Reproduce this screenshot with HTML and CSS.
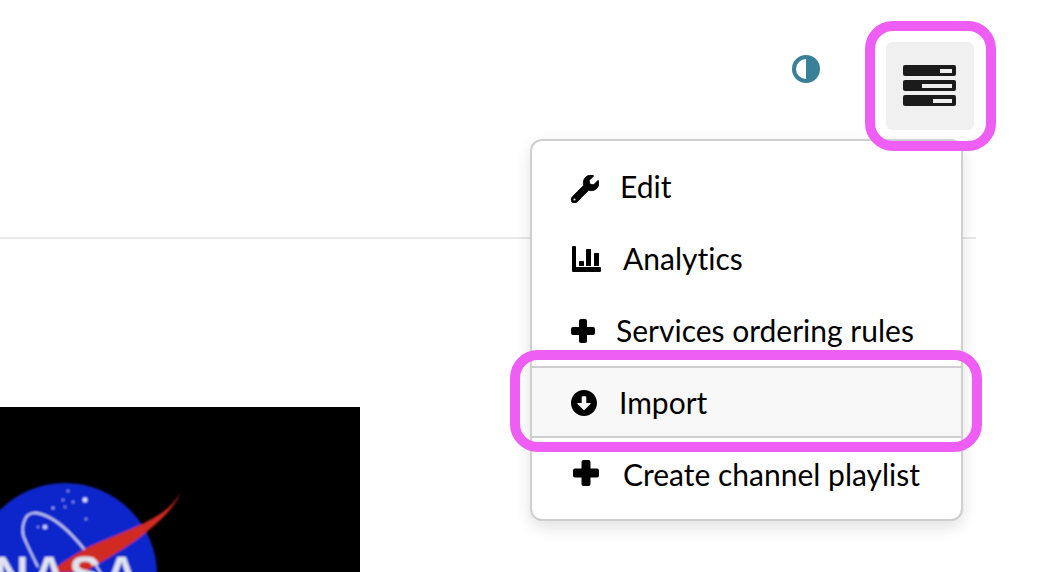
FILE: index.html
```html
<!DOCTYPE html>
<html lang="en">
<head>
    <meta charset="UTF-8">
    <meta name="viewport" content="width=device-width, initial-scale=1.0">
    <title>Channel</title>
    <link rel="stylesheet" href="styles.css">
</head>
<body>
    <header class="top-bar">
        <svg class="contrast-icon" viewBox="0 0 28 28">
            <circle cx="14" cy="14" r="12" fill="none" stroke="#3a8197" stroke-width="4"/>
            <path d="M14 2a12 12 0 0 1 0 24z" fill="#3a8197"/>
        </svg>
        <button class="menu-btn" type="button">
            <svg class="server-icon" viewBox="0 0 53 41">
                <rect x="0" y="0" width="53" height="11" rx="2" fill="#1b1b1b"/>
                <rect x="0" y="15" width="53" height="11" rx="2" fill="#1b1b1b"/>
                <rect x="0" y="30" width="53" height="11" rx="2" fill="#1b1b1b"/>
                <rect x="37" y="4" width="12" height="4" fill="#eee"/>
                <rect x="19" y="19" width="30" height="4" fill="#eee"/>
                <rect x="30" y="34" width="19" height="4" fill="#eee"/>
            </svg>
        </button>
    </header>

    <main class="content">
        <!-- channel thumbnail -->
        <svg class="thumb" viewBox="0 0 360 165">
            <defs>
                <filter id="soft"><feGaussianBlur stdDeviation="0.8"/></filter>
            </defs>
            <rect width="360" height="165" fill="#000"/>
            <g filter="url(#soft)">
                <circle cx="65" cy="168" r="92" fill="#0a28cc"/>
                <circle cx="85" cy="93" r="2.4" fill="#dfe4ff"/>
                <circle cx="45" cy="120" r="2.2" fill="#cfd6ff"/>
                <circle cx="63" cy="93" r="1" fill="#b9c3ff"/>
                <circle cx="73" cy="95" r="1" fill="#b9c3ff"/>
                <circle cx="68" cy="84" r="1" fill="#b9c3ff"/>
                <circle cx="53" cy="101" r="1.2" fill="#b9c3ff"/>
                <circle cx="65" cy="100" r="0.9" fill="#b9c3ff"/>
                <circle cx="86" cy="112" r="1" fill="#b9c3ff"/>
                <circle cx="38" cy="120" r="0.9" fill="#b9c3ff"/>
                <path d="M102 168C85 140 60 110 37 106C22 104 20 125 26 135C29 142 33 150 38 160" fill="none" stroke="#d8dcf5" stroke-width="1.8"/>
                <path d="M181 85C170 105 150 115 100 135C85 141 70 150 50 165L85 165C100 155 120 145 140 130C160 115 175 100 181 85z" fill="#d12c22"/>
                <text class="thumb-text" x="-6" y="183">NASA</text>
            </g>
        </svg>
    </main>

    <!-- dropdown, opened from the menu button -->
    <nav class="dropdown">
        <a class="dropdown-item">
            <svg class="icon icon-wrench" viewBox="0 0 512 512"><path d="M507.73 109.1c-2.24-9.03-13.54-12.09-20.12-5.51l-74.36 74.36-67.88-11.31-11.31-67.88 74.36-74.36c6.62-6.62 3.43-17.9-5.66-20.16-47.38-11.74-99.55.91-136.58 37.93-39.64 39.64-50.55 97.1-34.05 147.2L18.74 402.76c-24.99 24.99-24.99 65.51 0 90.5 24.99 24.99 65.51 24.99 90.5 0l213.21-213.21c50.12 16.71 107.47 5.68 147.37-34.22 37.07-37.07 49.7-89.32 37.91-136.73zM64 472c-13.25 0-24-10.75-24-24 0-13.26 10.75-24 24-24s24 10.74 24 24c0 13.25-10.75 24-24 24z"/></svg>
            Edit
        </a>
        <a class="dropdown-item">
            <svg class="icon icon-chart" viewBox="0 0 29 26"><path d="M0 1a1 1 0 0 1 1-1h2a1 1 0 0 1 1 1v20h24a1 1 0 0 1 1 1v3a1 1 0 0 1-1 1H1a1 1 0 0 1-1-1z"/><rect x="7" y="15" width="5" height="5" rx=".6"/><rect x="14" y="3" width="5" height="17" rx=".6"/><rect x="22" y="7" width="5" height="13" rx=".6"/></svg>
            Analytics
        </a>
        <a class="dropdown-item">
            <svg class="icon icon-plus" viewBox="0 0 24 24"><rect x="8" y="0" width="8" height="24" rx="2"/><rect x="0" y="8" width="24" height="8" rx="2"/></svg>
            Services ordering rules
        </a>
        <a class="dropdown-item active">
            <svg class="icon icon-import" viewBox="8 8 496 496"><path d="M504 256c0 137-111 248-248 248S8 393 8 256 119 8 256 8s248 111 248 248zM212 140v116h-70.900c-10.700 0-16.100 13-8.500 20.500l114.900 114.300c4.700 4.700 12.200 4.700 16.900 0l114.900-114.300c7.600-7.600 2.200-20.500-8.500-20.500H300V140c0-6.600-5.400-12-12-12h-64c-6.600 0-12 5.400-12 12z"/></svg>
            Import
        </a>
        <a class="dropdown-item">
            <svg class="icon icon-plus-lg" viewBox="0 0 26 26"><rect x="8.500" y="0" width="9" height="26" rx="2"/><rect x="0" y="8.500" width="26" height="9" rx="2"/></svg>
            Create channel playlist
        </a>
    </nav>

    <!-- annotation outlines from the docs screenshot -->
    <div class="callout callout-btn"></div>
    <div class="callout callout-item"></div>
</body>
</html>
```

FILE: styles.css
```css
* {
    box-sizing: border-box;
}

html, body {
    height: 100%;
}

body {
    margin: 0;
    position: relative;
    overflow: hidden;
    background: #fff;
    color: #000;
    font-family: Lato, 'Noto Sans', sans-serif;
}

.top-bar {
    width: 976px;
    height: 239px;
    padding: 42px 2px 0 0;
    display: flex;
    justify-content: flex-end;
    align-items: flex-start;
    border-bottom: 2px solid #e8e8e8;
}

.contrast-icon {
    width: 28px;
    height: 28px;
    margin: 13px 66px 0 0;
}

.menu-btn {
    width: 88px;
    height: 88px;
    padding: 0 1px 1px 0;
    border: none;
    border-radius: 6px;
    background: #f0f0f0;
    display: flex;
    align-items: center;
    justify-content: center;
}

.server-icon {
    width: 53px;
    height: 41px;
}

.content {
    padding-top: 168px;
}

.thumb {
    display: block;
    width: 360px;
    height: 165px;
}

.thumb-text {
    font-family: 'Liberation Sans', sans-serif;
    font-weight: 700;
    font-size: 48px;
    letter-spacing: 3px;
    fill: #dfe3ee;
}

.dropdown {
    position: absolute;
    left: 530px;
    top: 139px;
    width: 433px;
    height: 382px;
    padding-top: 9px;
    background: #fff;
    border: 2px solid #cfcfcf;
    border-radius: 12px;
    box-shadow: 0 6px 16px rgba(0, 0, 0, 0.12);
}

.dropdown-item {
    height: 72px;
    padding-left: 39px;
    display: flex;
    align-items: center;
    font-size: 30px;
    font-variant-ligatures: none;
    white-space: nowrap;
}

.dropdown-item.active {
    background: #f8f8f8;
    border-top: 2px solid #cfcfcf;
    border-bottom: 2px solid #cfcfcf;
}

.icon {
    flex: none;
    fill: #000;
}

.icon-wrench {
    width: 28px;
    height: 28px;
    margin: 5px 21px 0 0;
    stroke: #000;
    stroke-width: 14;
}

.icon-chart {
    width: 29px;
    height: 26px;
    margin: 2px 22px 0 1px;
}

.icon-plus {
    width: 24px;
    height: 24px;
    margin: 2px 21px 0 0;
}

.icon-import {
    width: 26px;
    height: 26px;
    margin: 2px 22px 0 0;
}

.icon-plus-lg {
    width: 26px;
    height: 26px;
    margin: -2px 24px 0 2px;
}

.callout {
    position: absolute;
    border: 10px solid #ee5df4;
    border-radius: 28px;
}

.callout-btn {
    left: 865px;
    top: 21px;
    width: 131px;
    height: 130px;
}

.callout-item {
    left: 510px;
    top: 350px;
    width: 472px;
    height: 102px;
}
```
